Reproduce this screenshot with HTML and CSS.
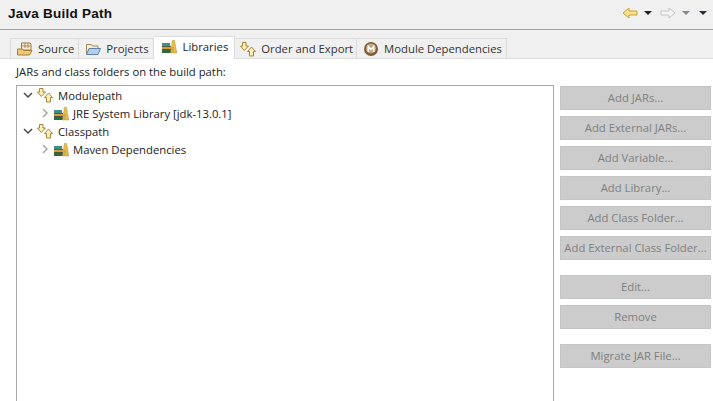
FILE: index.html
```html
<!DOCTYPE html>
<html lang="en">
<head>
<meta charset="utf-8">
<title>Java Build Path</title>
<link rel="stylesheet" href="styles.css">
</head>
<body>
<svg class="defs" width="0" height="0" aria-hidden="true">
  <symbol id="ico-lib" viewBox="0 0 16 16">
    <path d="M1 5h8v3.500H1z" fill="#3f8f8a"/>
    <path d="M1 8.500h9V11.500H1z" fill="#d99a3c"/>
    <path d="M1 11.500h10V15H1z" fill="#2f6a3f"/>
    <path d="M1 8.500h9M1 11.500h10" stroke="#2c3a2c" stroke-width=".7"/>
    <path d="M9.500 15 11.500 2.500h2L15.800 15h-3.500L12 9l-.5 6z" fill="#e8c04a" stroke="#a8862c" stroke-width=".5"/>
  </symbol>
  <symbol id="ico-path" viewBox="0 0 16 16">
    <path d="M2.500 1.500h3.500v3.500h2.500L4.300 9.500 0.500 5h2z" fill="#fbeeb8" stroke="#a8853a" stroke-width="1"/>
    <path d="M11.500 6 15.500 10.500h-2V15h-4v-4.500H7.500z" fill="#fbeeb8" stroke="#a8853a" stroke-width="1"/>
  </symbol>
  <symbol id="ico-src" viewBox="0 0 16 16">
    <path d="M4.500 2h8.500l1 1v6H4.500z" fill="#f6edd6" stroke="#9a7a40"/>
    <path d="M8 2v5M11 2v5M5 5h8.500" stroke="#9a7a40" stroke-width=".8"/>
    <path d="M.5 8h5l1 1.500h8.500L12.500 14H.5z" fill="#f0c878" stroke="#a87f35"/>
  </symbol>
  <symbol id="ico-prj" viewBox="0 0 16 16">
    <path d="M1.500 13V3.500h5l1 1.500h5.500V8" fill="#f2ecd8" stroke="#a08a5a"/>
    <path d="M1.500 13.500 4 7.500h11.500l-2.500 6z" fill="#b4cdea" stroke="#5f82ad"/>
  </symbol>
  <symbol id="ico-mod" viewBox="0 0 16 16">
    <circle cx="8" cy="8" r="7" fill="#7a5c40"/>
    <circle cx="8" cy="7.500" r="5" fill="#c9a57c"/>
    <path d="M5.300 11V5.500l2.700 3 2.700-3V11" fill="none" stroke="#fff" stroke-width="1.500"/>
  </symbol>
  <symbol id="tw-open" viewBox="0 0 10 10">
    <path d="M1 3 5 7 9 3" fill="none" stroke="#4a4a4a" stroke-width="1.500"/>
  </symbol>
  <symbol id="tw-closed" viewBox="0 0 10 10">
    <path d="M3 1 7 5 3 9" fill="none" stroke="#a8a8a8" stroke-width="1.500"/>
  </symbol>
</svg>

<header class="title-bar">
  <h1 class="title">Java Build Path</h1>
  <div class="nav">
    <svg class="nav-arrow" viewBox="0 0 16 12"><path d="M1 6 7 1v3h8v4H7v3z" fill="#fbe38e" stroke="#c9a03c"/></svg>
    <span class="caret"></span>
    <svg class="nav-arrow next" viewBox="0 0 16 12"><path d="M15 6 9 1v3H1v4h8v3z" fill="#f6f6f6" stroke="#c4c4c4"/></svg>
    <span class="caret dim"></span>
    <span class="caret last"></span>
  </div>
</header>

<nav class="tabs">
  <div class="tab"><svg class="ico"><use href="#ico-src"/></svg>Source</div>
  <div class="tab"><svg class="ico"><use href="#ico-prj"/></svg>Projects</div>
  <div class="tab active"><svg class="ico"><use href="#ico-lib"/></svg>Libraries</div>
  <div class="tab order"><svg class="ico"><use href="#ico-path"/></svg>Order and Export</div>
  <div class="tab"><svg class="ico"><use href="#ico-mod"/></svg>Module Dependencies</div>
</nav>

<main class="panel">
  <p class="caption">JARs and class folders on the build path:</p>
  <div class="columns">
    <div class="tree">
      <div class="row"><svg class="tw"><use href="#tw-open"/></svg><svg class="ico"><use href="#ico-path"/></svg>Modulepath</div>
      <div class="row child"><svg class="tw"><use href="#tw-closed"/></svg><svg class="ico"><use href="#ico-lib"/></svg>JRE System Library [jdk-13.0.1]</div>
      <div class="row"><svg class="tw"><use href="#tw-open"/></svg><svg class="ico"><use href="#ico-path"/></svg>Classpath</div>
      <div class="row child"><svg class="tw"><use href="#tw-closed"/></svg><svg class="ico"><use href="#ico-lib"/></svg>Maven Dependencies</div>
    </div>
    <div class="buttons">
      <button class="btn" disabled>Add JARs...</button>
      <button class="btn" disabled>Add External JARs...</button>
      <button class="btn" disabled>Add Variable...</button>
      <button class="btn" disabled>Add Library...</button>
      <button class="btn" disabled>Add Class Folder...</button>
      <button class="btn" disabled>Add External Class Folder...</button>
      <button class="btn group" disabled>Edit...</button>
      <button class="btn" disabled>Remove</button>
      <button class="btn group" disabled>Migrate JAR File...</button>
    </div>
  </div>
</main>
</body>
</html>
```
FILE: styles.css
```css
* { box-sizing: border-box; }
html, body { margin: 0; height: 100%; }
body {
  width: 713px;
  height: 401px;
  overflow: hidden;
  background: #fff;
  font-family: "Open Sans", "Noto Sans", sans-serif;
  font-size: 11.3px;
  color: #1c1c1c;
  display: flex;
  flex-direction: column;
}
.defs { position: absolute; }
.title-bar {
  height: 30px;
  flex: none;
  background: #f0f0f0;
  border-bottom: 1px solid #a3a3a3;
  display: flex;
  align-items: center;
  justify-content: space-between;
  padding: 0 0 3px 8px;
}
.title {
  margin: 0;
  font-family: "Liberation Sans", sans-serif;
  font-size: 13.5px;
  font-weight: 700;
  letter-spacing: .25px;
  color: #111;
}
.nav { display: flex; align-items: center; padding-right: 6px; }
.nav-arrow { width: 16px; height: 12px; margin-right: 6px; }
.nav-arrow.next { margin-left: 8px; }
.caret {
  width: 0; height: 0;
  border-left: 4px solid transparent;
  border-right: 4px solid transparent;
  border-top: 4px solid #222;
}
.caret.dim { border-top-color: #888; }
.caret.last { margin-left: 9px; border-top-color: #2b2b3b; }
.tabs {
  flex: none;
  height: 29px;
  background: #f0f0f0;
  display: flex;
  align-items: flex-end;
  padding-left: 10px;
  border-bottom: 1px solid #dcdcdc;
}
.tab {
  height: 20px;
  display: flex;
  align-items: center;
  gap: 5px;
  padding: 0 4px 0 6px;
  background: #f0f0f0;
  border: 1px solid #dcdcdc;
  border-bottom: 0;
  border-left: 0;
  white-space: nowrap;
  color: #333;
}
.tab:first-child { border-left: 1px solid #dcdcdc; }
.tab.active {
  height: 23px;
  margin-bottom: -1px;
  background: #fff;
  color: #1c1c1c;
  padding: 0 6px 4px 7px;
  gap: 6px;
}
.tab.order { padding: 0 3px 0 5px; }
.ico { width: 16px; height: 16px; flex: none; }
.panel {
  flex: 1;
  min-height: 0;
  padding: 5px 2px 0 16px;
  display: flex;
  flex-direction: column;
}
.caption { margin: 0 0 6px; line-height: 15px; color: #222; }
.columns { flex: 1; min-height: 0; display: flex; gap: 6px; }
.tree {
  width: 538px;
  flex: none;
  height: 316px;
  border: 1px solid #a8a8a8;
  border-bottom: 0;
  padding: 1px 0 0 6px;
}
.row {
  height: 18px;
  display: flex;
  align-items: center;
  gap: 4px;
  white-space: nowrap;
  padding-bottom: 2px;
}
.row .ico { margin-right: 1px; }
.row.child { padding-left: 17px; gap: 3px; }
.row.child .ico { margin-right: 1px; }
.tw { width: 10px; height: 10px; flex: none; margin-right: 0; }
.buttons { flex: 1; display: flex; flex-direction: column; padding-top: 1px; min-height: 0; }
.btn {
  height: 24px;
  flex: none;
  margin: 0 0 6px;
  padding: 0 0 2px;
  background: #cccccc;
  border: 1px solid #c4c4c4;
  color: #808080;
  font: inherit;
  white-space: nowrap;
}
.btn.group { margin-top: 9px; }
```
